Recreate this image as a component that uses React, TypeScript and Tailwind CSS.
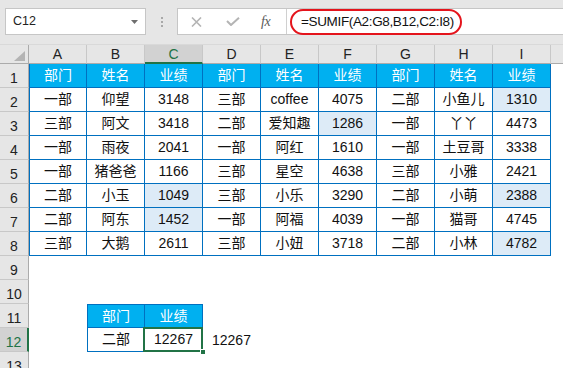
import React from "react";

const COLS = ["A", "B", "C", "D", "E", "F", "G", "H", "I"];

const HEAD = ["部门", "姓名", "业绩", "部门", "姓名", "业绩", "部门", "姓名", "业绩"];

const DATA: string[][] = [
  ["一部", "仰望", "3148", "三部", "coffee", "4075", "二部", "小鱼儿", "1310"],
  ["三部", "阿文", "3418", "二部", "爱知趣", "1286", "一部", "丫丫", "4473"],
  ["一部", "雨夜", "2041", "一部", "阿红", "1610", "一部", "土豆哥", "3338"],
  ["一部", "猪爸爸", "1166", "三部", "星空", "4638", "三部", "小雅", "2421"],
  ["二部", "小玉", "1049", "三部", "小乐", "3290", "二部", "小萌", "2388"],
  ["二部", "阿东", "1452", "一部", "阿福", "4039", "一部", "猫哥", "4745"],
  ["三部", "大鹅", "2611", "三部", "小妞", "3718", "二部", "小林", "4782"],
];

// cells matched by the conditional fill (row number, column index)
const FILLED = new Set(["2-8", "3-5", "6-2", "7-2", "6-8", "8-8"]);

function RowHead({ n, active }: { n: number; active?: boolean }) {
  return (
    <div
      className={
        active
          ? "flex items-end justify-center pb-[2px] leading-none bg-[#d2d2d2] border-b border-[#c8c8c8] border-r-2 border-r-[#217346] text-[#217346]"
          : "flex items-end justify-center pb-[2px] leading-none bg-[#e6e6e6] border-b border-[#c8c8c8] border-r border-r-[#ababab] text-[#222]"
      }
    >
      {n}
    </div>
  );
}

function Toolbar() {
  return (
    <div className="h-[45px] bg-[#e6e6e6] border-b border-[#d9d9d9] flex items-start pt-[8px]">
      <div className="ml-[5px] w-[141px] h-[27px] bg-white border border-[#c6c6c6] flex items-center justify-between pl-[7px] pr-[7px] text-[12.5px] text-[#222]">
        <span>C12</span>
        <svg width="7" height="4" viewBox="0 0 7 4">
          <path d="M0 0 L7 0 L3.5 4 Z" fill="#6e6e6e" />
        </svg>
      </div>
      <div className="w-[31px] h-[27px] flex flex-col items-center justify-center gap-[2px]">
        <span className="w-[2px] h-[2px] bg-[#a8a8a8]" />
        <span className="w-[2px] h-[2px] bg-[#a8a8a8]" />
        <span className="w-[2px] h-[2px] bg-[#a8a8a8]" />
      </div>
      <div className="flex-1 h-[27px] bg-white border border-[#c6c6c6] border-r-0 flex">
        <div className="w-[109px] h-full border-r border-[#d0d0d0] flex items-center">
          <svg className="ml-[13px]" width="11" height="10" viewBox="0 0 11 10">
            <path d="M1 0.5 L10 9.5 M10 0.5 L1 9.5" stroke="#b4b4b4" strokeWidth="1.6" fill="none" />
          </svg>
          <svg className="ml-[24px]" width="14" height="9" viewBox="0 0 14 9">
            <path d="M1 4 L5 8 L13 0.8" stroke="#b4b4b4" strokeWidth="2" fill="none" />
          </svg>
          <span className="ml-[21px] font-['Liberation_Serif',serif] italic text-[14px] text-[#5a5a5a] leading-none tracking-[-0.5px]">
            fx
          </span>
        </div>
        <div className="flex-1 flex items-center pl-[3px]">
          <div className="h-[26px] w-[172px] mt-[1px] rounded-[13px] border-2 border-[#e4141c] flex items-center pl-[9px] text-[13.5px] tracking-[-0.35px] text-[#111]">
            =SUMIF(A2:G8,B12,C2:I8)
          </div>
        </div>
      </div>
    </div>
  );
}

function ColHeads() {
  return (
    <>
      <div className="bg-[#e6e6e6] border-r border-[#ababab] border-b border-b-[#ababab] flex items-end justify-end pr-[3px] pb-[2px]">
        <svg width="11" height="10" viewBox="0 0 11 10">
          <path d="M11 0 L11 10 L0 10 Z" fill="#b4b4b4" />
        </svg>
      </div>
      {COLS.map((c) =>
        c === "C" ? (
          <div
            key={c}
            className="bg-[#d2d2d2] border-r border-[#c8c8c8] border-b-2 border-b-[#217346] flex items-end justify-center pb-[1px] leading-none text-[#217346]"
          >
            {c}
          </div>
        ) : (
          <div
            key={c}
            className="bg-[#e6e6e6] border-r border-[#c8c8c8] border-b border-b-[#ababab] flex items-end justify-center pb-[2px] leading-none text-[#222]"
          >
            {c}
          </div>
        )
      )}
      <div className="bg-[#e6e6e6] border-b border-[#ababab]" />
    </>
  );
}

function TableCell({
  text,
  col,
  head,
  filled,
}: {
  text: string;
  col: number;
  head?: boolean;
  filled?: boolean;
}) {
  const left = col === 0 ? "border-l" : "";
  const bg = head ? "bg-[#00b0f0] text-white" : filled ? "bg-[#ddebf7] text-[#111]" : "bg-white text-[#111]";
  return (
    <div className={`flex items-center justify-center border-r border-b border-[#0070c0] ${left} ${bg}`}>
      {text}
    </div>
  );
}

function Empty({ n }: { n: number }) {
  return (
    <>
      {Array.from({ length: n }).map((_, i) => (
        <div key={i} className="bg-white" />
      ))}
    </>
  );
}

export default function App() {
  return (
    <div className="w-[563px] h-[368px] overflow-hidden bg-white font-['Liberation_Sans','Noto_Sans_CJK_SC',sans-serif] text-[14px]">
      <Toolbar />
      <div className="grid grid-cols-[29px_repeat(9,58px)_minmax(0,1fr)] grid-rows-[19px_repeat(13,24px)]">
        <ColHeads />

        {/* row 1: header of the main table */}
        <RowHead n={1} />
        {HEAD.map((h, i) => (
          <TableCell key={i} text={h} col={i} head />
        ))}
        <div className="bg-white" />

        {/* rows 2-8 */}
        {DATA.map((row, r) => (
          <React.Fragment key={r}>
            <RowHead n={r + 2} />
            {row.map((v, i) => (
              <TableCell key={i} text={v} col={i} filled={FILLED.has(`${r + 2}-${i}`)} />
            ))}
            <div className="bg-white" />
          </React.Fragment>
        ))}

        {/* rows 9-10 */}
        <RowHead n={9} />
        <Empty n={10} />
        <RowHead n={10} />
        <Empty n={10} />

        {/* row 11: lookup table header */}
        <RowHead n={11} />
        <div className="bg-white" />
        <div className="flex items-center justify-center bg-[#00b0f0] text-white border border-[#0070c0]">部门</div>
        <div className="flex items-center justify-center bg-[#00b0f0] text-white border-t border-r border-b border-[#0070c0]">业绩</div>
        <Empty n={7} />

        {/* row 12: lookup result */}
        <RowHead n={12} active />
        <div className="bg-white" />
        <div className="flex items-center justify-center bg-white text-[#111] border-l border-r border-b border-[#0070c0]">二部</div>
        <div className="relative flex items-center justify-center bg-white text-[#111] border-r border-b border-[#0070c0]">
          12267
          <div className="absolute -left-[2px] -top-[1px] -right-[1px] -bottom-[1px] border-2 border-[#217346]" />
          <div className="absolute -right-[4px] -bottom-[4px] w-[6px] h-[6px] bg-[#217346] border border-white" />
        </div>
        <div className="flex items-center pl-[9px] bg-white text-[#111]">12267</div>
        <Empty n={6} />

        {/* row 13 */}
        <RowHead n={13} />
        <Empty n={10} />
      </div>
    </div>
  );
}
